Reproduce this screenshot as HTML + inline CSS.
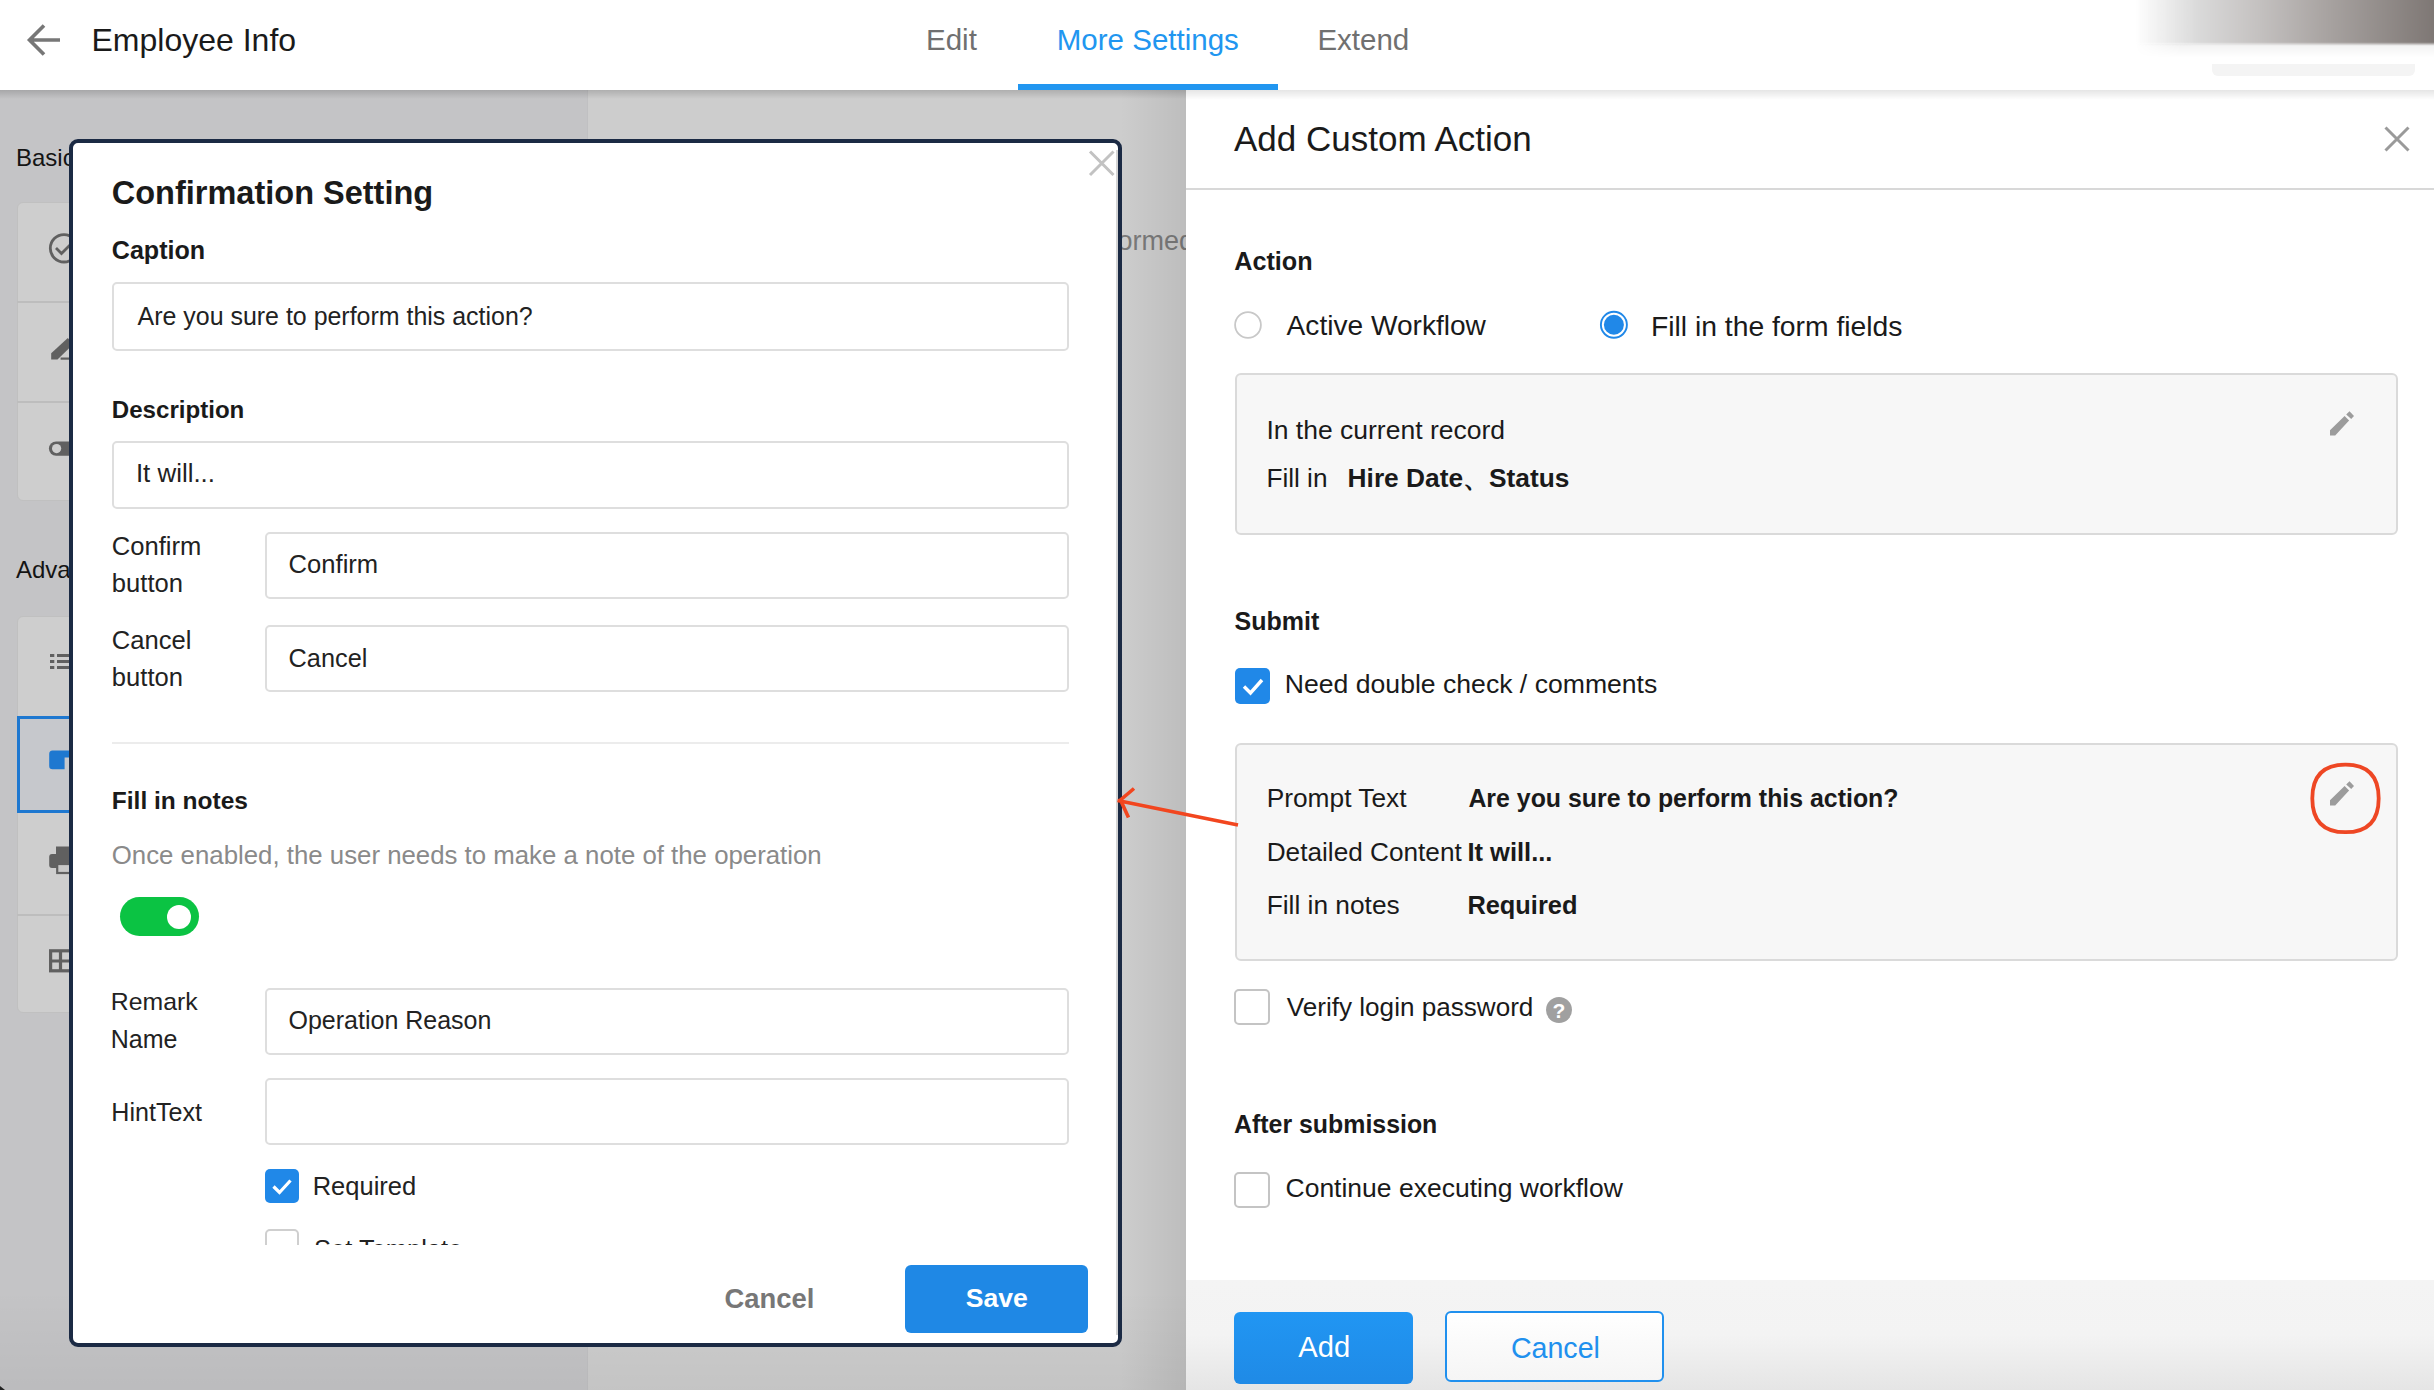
<!DOCTYPE html>
<html><head><meta charset="utf-8"><style>
html,body{margin:0;padding:0;width:2434px;height:1390px;overflow:hidden;position:relative;background:#fff}
.t{font-family:"Liberation Sans",sans-serif;line-height:1;white-space:nowrap}
</style></head><body>
<div style="position:absolute;left:0px;top:0px;width:2434px;height:1390px;background:#fff"></div>
<div style="position:absolute;left:0px;top:90px;width:588px;height:1300px;background:#c4c4c6"></div>
<div style="position:absolute;left:588px;top:90px;width:598px;height:1300px;background:#cdcdcd"></div>
<div style="position:absolute;left:587px;top:90px;width:1px;height:1300px;background:#c0c0c2"></div>
<div style="position:absolute;left:16.00px;top:146.08px;font-size:24px;font-weight:400;color:#141414;" class="t">Basic</div>
<div style="position:absolute;left:16.00px;top:558.48px;font-size:24px;font-weight:400;color:#141414;" class="t">Advanced</div>
<div style="position:absolute;left:17px;top:202px;width:300px;height:299px;background:#cecece;border:1px solid #c0c0c0;border-radius:6px;box-sizing:border-box"></div>
<div style="position:absolute;left:17px;top:301px;width:300px;height:2px;background:#bdbdbd"></div>
<div style="position:absolute;left:17px;top:401px;width:300px;height:2px;background:#bdbdbd"></div>
<div style="position:absolute;left:17px;top:616px;width:300px;height:397px;background:#cecece;border:1px solid #c0c0c0;border-radius:6px;box-sizing:border-box"></div>
<div style="position:absolute;left:17px;top:914px;width:300px;height:2px;background:#bdbdbd"></div>
<div style="position:absolute;left:17px;top:716px;width:120px;height:97px;background:#c6c8cc;border:3px solid #1e78d0;box-sizing:border-box"></div>
<svg style="position:absolute;left:0;top:0" width="80" height="1100" viewBox="0 0 80 1100"><circle cx="64" cy="248.3" r="13.7" fill="none" stroke="#606060" stroke-width="2.8"/><path d="M56 248 L61.5 253.5 L72 243" fill="none" stroke="#606060" stroke-width="2.8"/><path d="M51.2 359.5 L51.2 353.2 L67.8 338 L73.5 344 L57.5 359.5 Z" fill="#606060"/><rect x="60.6" y="357.5" width="20" height="2.2" fill="#606060"/><rect x="48.9" y="441.4" width="40" height="14.4" rx="7.2" fill="#606060"/><circle cx="56.6" cy="448.6" r="4.6" fill="#cecece"/><rect x="50" y="654" width="4.3" height="3" fill="#606060"/><rect x="57" y="654" width="20" height="3" fill="#606060"/><rect x="50" y="660" width="4.3" height="3" fill="#606060"/><rect x="57" y="660" width="20" height="3" fill="#606060"/><rect x="50" y="666" width="4.3" height="3" fill="#606060"/><rect x="57" y="666" width="20" height="3" fill="#606060"/><path d="M52.5 750.5 H80 V757.5 H64.6 V769.3 H52.5 Q49.2 769.3 49.2 766 V754 Q49.2 750.5 52.5 750.5 Z" fill="#1e78d0"/><rect x="56" y="846.5" width="24" height="8" fill="#606060"/><path d="M52 854 H80 V868 H52 Q49.2 868 49.2 865 V857 Q49.2 854 52 854 Z" fill="#606060"/><rect x="57.2" y="864" width="23" height="9" fill="#c8c8c8" stroke="#606060" stroke-width="2.2"/><rect x="50.6" y="950.8" width="30" height="20" fill="none" stroke="#606060" stroke-width="3.2"/><path d="M50 961 H80 M60.5 950 V971" stroke="#606060" stroke-width="3.2"/></svg>
<div style="position:absolute;left:1110.00px;top:228.14px;font-size:27px;font-weight:400;color:#7a7a7a;" class="t">formed</div>
<div style="position:absolute;left:1120px;top:90px;width:66px;height:1300px;background:linear-gradient(to right, rgba(0,0,0,0), rgba(0,0,0,0.08))"></div>
<div style="position:absolute;left:0px;top:90px;width:1186px;height:9px;background:linear-gradient(to bottom, rgba(0,0,0,0.15), rgba(0,0,0,0))"></div>
<div style="position:absolute;left:0px;top:1290px;width:1186px;height:100px;background:linear-gradient(to bottom, rgba(0,0,0,0), rgba(0,0,0,0.045))"></div>
<svg style="position:absolute;left:0;top:1370px" width="20" height="20"><path d="M0 16 L5 20 L0 20 Z" fill="#222"/></svg>
<div style="position:absolute;left:0px;top:0px;width:2434px;height:90px;background:#fff"></div>
<svg style="position:absolute;left:0;top:0" width="80" height="80"><path d="M44 25.5 L29.5 40 L44 54.5 M29.5 40 H60" fill="none" stroke="#777" stroke-width="3.6"/></svg>
<div style="position:absolute;left:91.50px;top:23.91px;font-size:32px;font-weight:400;color:#1a1a1a;" class="t">Employee Info</div>
<div style="position:absolute;left:926.00px;top:25.23px;font-size:29.5px;font-weight:400;color:#707070;" class="t">Edit</div>
<div style="position:absolute;left:1056.80px;top:25.23px;font-size:29.5px;font-weight:400;color:#2196f0;" class="t">More Settings</div>
<div style="position:absolute;left:1317.40px;top:25.23px;font-size:29.5px;font-weight:400;color:#707070;" class="t">Extend</div>
<div style="position:absolute;left:1018px;top:84px;width:260px;height:6px;background:#2196f0"></div>
<div style="position:absolute;left:2135px;top:44px;width:310px;height:14px;background:linear-gradient(to bottom, rgba(0,0,0,0.05), rgba(0,0,0,0));-webkit-mask-image:linear-gradient(to right, transparent, #000 15%)"></div>
<div style="position:absolute;left:2135px;top:-4px;width:310px;height:48px;background:linear-gradient(to right, rgba(255,255,255,0) 0%, rgba(218,218,218,1) 20%, #c4c1c0 40%, #a8a3a1 62%, #7a7370 100%);filter:blur(1.2px)"></div>
<div style="position:absolute;left:2212px;top:64px;width:203px;height:12px;background:#f4f4f4;border-radius:0 0 6px 6px"></div>
<div style="position:absolute;left:1186px;top:90px;width:1248px;height:1300px;background:#fff"></div>
<div style="position:absolute;left:1186px;top:90px;width:1248px;height:10px;background:linear-gradient(to bottom, rgba(0,0,0,0.10), rgba(0,0,0,0))"></div>
<div style="position:absolute;left:1234.00px;top:121.37px;font-size:35px;font-weight:400;color:#1a1a1a;" class="t">Add Custom Action</div>
<svg style="position:absolute;left:2380px;top:122px" width="36" height="36"><path d="M5.5 5.5 L28.5 28.5 M28.5 5.5 L5.5 28.5" stroke="#9a9a9a" stroke-width="3"/></svg>
<div style="position:absolute;left:1186px;top:188px;width:1248px;height:2px;background:#d8d8d8"></div>
<div style="position:absolute;left:1234.20px;top:248.67px;font-size:25.2px;font-weight:700;color:#1a1a1a;" class="t">Action</div>
<svg style="position:absolute;left:1220px;top:300px" width="50" height="50"><circle cx="28" cy="25" r="12.9" fill="#fff" stroke="#c8c8c8" stroke-width="1.8"/></svg>
<div style="position:absolute;left:1286.60px;top:312.01px;font-size:28.1px;font-weight:400;color:#1a1a1a;" class="t">Active Workflow</div>
<svg style="position:absolute;left:1590px;top:300px" width="50" height="50"><circle cx="23.9" cy="24.8" r="13" fill="#fff" stroke="#2088e8" stroke-width="1.9"/><circle cx="23.9" cy="24.8" r="10" fill="#2088e8"/></svg>
<div style="position:absolute;left:1650.90px;top:311.84px;font-size:28.3px;font-weight:400;color:#1a1a1a;" class="t">Fill in the form fields</div>
<div style="position:absolute;left:1234.5px;top:372.5px;width:1163px;height:162.5px;background:#f7f7f7;border:2px solid #dadada;border-radius:6px;box-sizing:border-box"></div>
<div style="position:absolute;left:1266.40px;top:416.57px;font-size:26.5px;font-weight:400;color:#1a1a1a;" class="t">In the current record</div>
<div style="position:absolute;left:1266.40px;top:465.22px;font-size:26.2px;font-weight:400;color:#1a1a1a;" class="t">Fill in</div>
<div style="position:absolute;left:1347.60px;top:465.14px;font-size:26.3px;font-weight:700;color:#1a1a1a;" class="t">Hire Date、Status</div>
<svg style="position:absolute;left:2330px;top:411px" width="25" height="25" viewBox="0 0 25 25"><path d="M0 24.4 L0 19.3 L14.6 5 L19.1 9.4 L5.2 24.4 Z M16.2 3.4 L19.5 0.3 L24 4.9 L21.2 8 Z" fill="#9c9c9c"/></svg>
<div style="position:absolute;left:1234.50px;top:608.84px;font-size:25px;font-weight:700;color:#1a1a1a;" class="t">Submit</div>
<div style="position:absolute;left:1234.5px;top:668px;width:35.5px;height:35.5px;background:#2088e8;border-radius:5px"></div>
<svg style="position:absolute;left:1234.5px;top:668px" width="36" height="36"><path d="M9 18.5 L15.5 25 L27 12" fill="none" stroke="#fff" stroke-width="3.4"/></svg>
<div style="position:absolute;left:1284.80px;top:670.98px;font-size:26.6px;font-weight:400;color:#1a1a1a;" class="t">Need double check / comments</div>
<div style="position:absolute;left:1234.5px;top:742.5px;width:1163px;height:218.5px;background:#f7f7f7;border:2px solid #dadada;border-radius:6px;box-sizing:border-box"></div>
<div style="position:absolute;left:1266.70px;top:784.74px;font-size:26.3px;font-weight:400;color:#1a1a1a;" class="t">Prompt Text</div>
<div style="position:absolute;left:1468.40px;top:785.92px;font-size:24.9px;font-weight:700;color:#1a1a1a;" class="t">Are you sure to perform this action?</div>
<div style="position:absolute;left:1266.70px;top:838.92px;font-size:26.2px;font-weight:400;color:#1a1a1a;" class="t">Detailed Content</div>
<div style="position:absolute;left:1467.40px;top:839.51px;font-size:25.5px;font-weight:700;color:#1a1a1a;" class="t">It will...</div>
<div style="position:absolute;left:1266.70px;top:892.34px;font-size:26.3px;font-weight:400;color:#1a1a1a;" class="t">Fill in notes</div>
<div style="position:absolute;left:1467.40px;top:893.10px;font-size:25.4px;font-weight:700;color:#1a1a1a;" class="t">Required</div>
<svg style="position:absolute;left:2330px;top:781px" width="25" height="25" viewBox="0 0 25 25"><path d="M0 24.4 L0 19.3 L14.6 5 L19.1 9.4 L5.2 24.4 Z M16.2 3.4 L19.5 0.3 L24 4.9 L21.2 8 Z" fill="#9c9c9c"/></svg>
<svg style="position:absolute;left:0;top:0" width="2434" height="1390"><path d="M2312.3 798.4 C2312.3 775.75 2323.26 764.6 2345.5 764.6 C2367.74 764.6 2378.7 775.75 2378.7 798.4 C2378.7 821.05 2367.74 832.1999999999999 2345.5 832.1999999999999 C2323.26 832.1999999999999 2312.3 821.05 2312.3 798.4 Z" fill="none" stroke="#ee4724" stroke-width="3.8"/></svg>
<div style="position:absolute;left:1234px;top:989px;width:36px;height:36px;background:#fff;border:2.2px solid #c4c4c4;border-radius:5px;box-sizing:border-box"></div>
<div style="position:absolute;left:1286.80px;top:993.71px;font-size:26.1px;font-weight:400;color:#1a1a1a;" class="t">Verify login password</div>
<div style="position:absolute;left:1546px;top:996.5px;width:26px;height:26px;border-radius:50%;background:#a0a0a0;color:#fff;font:700 21px/27px 'Liberation Sans',sans-serif;text-align:center">?</div>
<div style="position:absolute;left:1234.00px;top:1112.32px;font-size:24.9px;font-weight:700;color:#1a1a1a;" class="t">After submission</div>
<div style="position:absolute;left:1234px;top:1172px;width:36px;height:36px;background:#fff;border:2.2px solid #c4c4c4;border-radius:5px;box-sizing:border-box"></div>
<div style="position:absolute;left:1285.50px;top:1175.07px;font-size:26.5px;font-weight:400;color:#1a1a1a;" class="t">Continue executing workflow</div>
<div style="position:absolute;left:1186px;top:1280px;width:1248px;height:110px;background:linear-gradient(to bottom, #f4f4f4 0%, #f3f3f3 50%, #e5e5e5 100%)"></div>
<div style="position:absolute;left:1234px;top:1312px;width:179px;height:72px;background:linear-gradient(to bottom,#2196f3,#1f8ae6);border-radius:6px"></div>
<div style="position:absolute;left:1298.30px;top:1333.48px;font-size:29.2px;font-weight:400;color:#ffffff;" class="t">Add</div>
<div style="position:absolute;left:1445px;top:1310.5px;width:218.5px;height:71px;background:linear-gradient(to bottom,#fff,#f5f5f5);border:2px solid #2090ee;border-radius:6px;box-sizing:border-box"></div>
<div style="position:absolute;left:1510.90px;top:1333.99px;font-size:28.6px;font-weight:400;color:#2090ee;" class="t">Cancel</div>
<div style="position:absolute;left:69px;top:139px;width:1053px;height:1208px;background:#fff;border:4px solid #1b2a44;border-radius:9px;box-sizing:border-box"></div>
<div style="position:absolute;left:1116px;top:150px;width:2px;height:1185px;background:#d4d4d4"></div>
<svg style="position:absolute;left:1084px;top:146px" width="36" height="36"><path d="M6 5.5 L29.5 29 M29.5 5.5 L6 29" stroke="#c2c2c2" stroke-width="3"/></svg>
<div style="position:absolute;left:111.80px;top:176.69px;font-size:32.5px;font-weight:700;color:#1a1a1a;" class="t">Confirmation Setting</div>
<div style="position:absolute;left:111.80px;top:237.75px;font-size:25.1px;font-weight:700;color:#1a1a1a;" class="t">Caption</div>
<div style="position:absolute;left:112px;top:282px;width:957px;height:68.5px;background:#fff;border:2px solid #dedede;border-radius:5px;box-sizing:border-box"></div>
<div style="position:absolute;left:137.60px;top:304.18px;font-size:24.95px;font-weight:400;color:#222;" class="t">Are you sure to perform this action?</div>
<div style="position:absolute;left:111.80px;top:397.90px;font-size:24.1px;font-weight:700;color:#1a1a1a;" class="t">Description</div>
<div style="position:absolute;left:112px;top:441px;width:957px;height:67.5px;background:#fff;border:2px solid #dedede;border-radius:5px;box-sizing:border-box"></div>
<div style="position:absolute;left:135.90px;top:461.38px;font-size:25.9px;font-weight:400;color:#222;" class="t">It will...</div>
<div style="position:absolute;left:111.80px;top:534.13px;font-size:25.6px;font-weight:400;color:#222;" class="t">Confirm</div>
<div style="position:absolute;left:111.80px;top:571.03px;font-size:25.6px;font-weight:400;color:#222;" class="t">button</div>
<div style="position:absolute;left:264.5px;top:531.5px;width:804.5px;height:67.5px;background:#fff;border:2px solid #dedede;border-radius:5px;box-sizing:border-box"></div>
<div style="position:absolute;left:288.60px;top:552.43px;font-size:25.6px;font-weight:400;color:#222;" class="t">Confirm</div>
<div style="position:absolute;left:111.80px;top:627.63px;font-size:25.6px;font-weight:400;color:#222;" class="t">Cancel</div>
<div style="position:absolute;left:111.80px;top:664.53px;font-size:25.6px;font-weight:400;color:#222;" class="t">button</div>
<div style="position:absolute;left:264.5px;top:625px;width:804.5px;height:67px;background:#fff;border:2px solid #dedede;border-radius:5px;box-sizing:border-box"></div>
<div style="position:absolute;left:288.60px;top:646.18px;font-size:25.3px;font-weight:400;color:#222;" class="t">Cancel</div>
<div style="position:absolute;left:112px;top:742px;width:957px;height:2px;background:#ececec"></div>
<div style="position:absolute;left:111.80px;top:789.26px;font-size:24.5px;font-weight:700;color:#1a1a1a;" class="t">Fill in notes</div>
<div style="position:absolute;left:111.80px;top:843.46px;font-size:25.8px;font-weight:400;color:#8a8a8a;" class="t">Once enabled, the user needs to make a note of the operation</div>
<div style="position:absolute;left:119.8px;top:896.8px;width:79.5px;height:39.5px;background:#0bc343;border-radius:20px"></div>
<div style="position:absolute;left:167px;top:904.5px;width:24px;height:24px;background:#fff;border-radius:50%"></div>
<div style="position:absolute;left:110.80px;top:990.21px;font-size:24.8px;font-weight:400;color:#222;" class="t">Remark</div>
<div style="position:absolute;left:110.80px;top:1027.04px;font-size:25px;font-weight:400;color:#222;" class="t">Name</div>
<div style="position:absolute;left:264.5px;top:987.5px;width:804.5px;height:67px;background:#fff;border:2px solid #dedede;border-radius:5px;box-sizing:border-box"></div>
<div style="position:absolute;left:288.50px;top:1008.04px;font-size:25px;font-weight:400;color:#222;" class="t">Operation Reason</div>
<div style="position:absolute;left:111.30px;top:1099.75px;font-size:25.1px;font-weight:400;color:#222;" class="t">HintText</div>
<div style="position:absolute;left:264.5px;top:1078px;width:804.5px;height:67px;background:#fff;border:2px solid #dedede;border-radius:5px;box-sizing:border-box"></div>
<div style="position:absolute;left:264.8px;top:1169px;width:34px;height:34px;background:#2088e8;border-radius:5px"></div>
<svg style="position:absolute;left:264.8px;top:1169px" width="34" height="34"><path d="M8.5 17.5 L14.5 23.5 L25.5 11.5" fill="none" stroke="#fff" stroke-width="3.2"/></svg>
<div style="position:absolute;left:312.70px;top:1174.41px;font-size:25.5px;font-weight:400;color:#222;" class="t">Required</div>
<div style="position:absolute;left:250px;top:1220px;width:500px;height:24.5px;overflow:hidden"><div style="position:absolute;left:14.8px;top:8.8px;width:34px;height:34px;border:2px solid #cfcfcf;border-radius:5px;box-sizing:border-box"></div><div style="position:absolute;left:64px;top:17px;font:400 25.5px/1 'Liberation Sans',sans-serif;color:#222;white-space:nowrap">Set Template</div></div>
<div style="position:absolute;left:724.50px;top:1284.81px;font-size:27.4px;font-weight:700;color:#777;" class="t">Cancel</div>
<div style="position:absolute;left:904.5px;top:1264.5px;width:183.5px;height:68px;background:#1f88e5;border-radius:6px"></div>
<div style="position:absolute;left:965.80px;top:1285.48px;font-size:26.6px;font-weight:700;color:#fff;" class="t">Save</div>
<svg style="position:absolute;left:0;top:0;overflow:visible" width="2434" height="1390"><path d="M1238 825 L1117.5 800.5 M1134 788.5 L1120.5 800 L1128.5 817.5" fill="none" stroke="#f2461f" stroke-width="3.6" stroke-linecap="butt" stroke-linejoin="miter"/></svg>
</body></html>
